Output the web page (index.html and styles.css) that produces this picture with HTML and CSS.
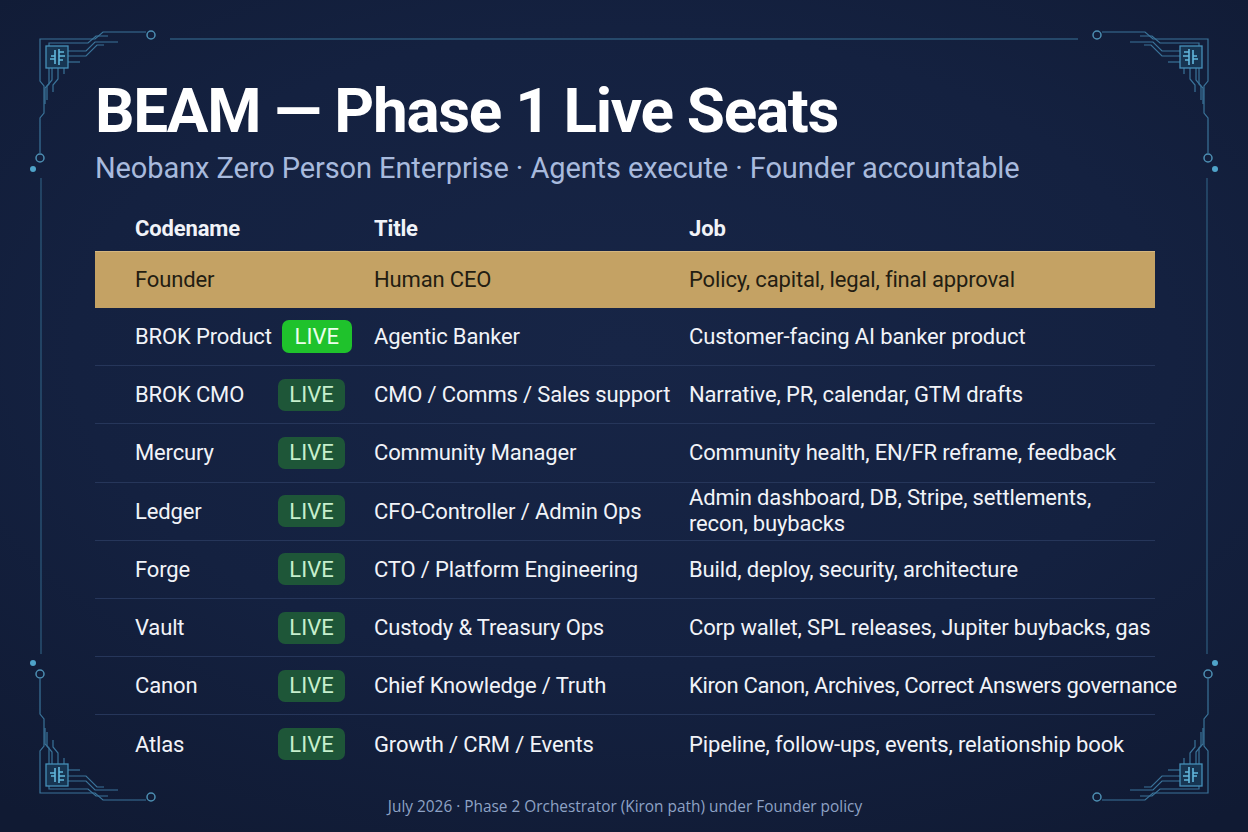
FILE: index.html
```html
<!DOCTYPE html>
<html lang="en">
<head>
<meta charset="utf-8">
<title>BEAM — Phase 1 Live Seats</title>
<link rel="stylesheet" href="styles.css">
</head>
<body>
<div class="slide">
  <svg class="deco" width="1248" height="832" viewBox="0 0 1248 832" aria-hidden="true">
    <defs>
      <g id="corner">
        <g class="trace">
          <path d="M40 153 V118 L44 113 V86 L40 81 V39 H95 L103 32 H146"/>
          <path d="M45 104 V88 L49 84 V43 H88 L96 36 H108"/>
          <path d="M68 51 H86 L95 42 H118"/>
          <path d="M68 56 H86 L97 45 H104"/>
          <path d="M68 62 H80"/>
          <path d="M52 68 V80 L47 86 V100"/>
          <path d="M58 68 V79 L53 85 V92"/>
          <path d="M64 68 V74"/>
        </g>
        <rect class="chip" x="46" y="46" width="22" height="22"/>
        <g class="glyph">
          <path d="M55 50 V64 M59 49 V65 M51 56 H55 M50 59 H55 M59 52 H64 M59 56 H65 M59 60 H63"/>
        </g>
        <circle class="ring" cx="151" cy="35" r="4"/>
        <circle class="ring" cx="40" cy="158" r="4"/>
        <circle class="dot" cx="33" cy="169" r="3"/>
      </g>
    </defs>
    <path class="frame" d="M170 39 H1078 M41 178 V654 M1207 178 V654"/>
    <use href="#corner"/>
    <use href="#corner" transform="translate(1248 0) scale(-1 1)"/>
    <use href="#corner" transform="translate(0 832) scale(1 -1)"/>
    <use href="#corner" transform="translate(1248 832) scale(-1 -1)"/>
  </svg>

  <main class="content">
    <h1 class="title">BEAM — Phase 1 Live Seats</h1>
    <p class="subtitle">Neobanx Zero Person Enterprise · Agents execute · Founder accountable</p>

    <div class="table">
      <div class="row head">
        <div class="cell c1">Codename</div>
        <div class="cell c2">Title</div>
        <div class="cell c3">Job</div>
      </div>
      <div class="row founder">
        <div class="cell c1">Founder</div>
        <div class="cell c2">Human CEO</div>
        <div class="cell c3">Policy, capital, legal, final approval</div>
      </div>
      <div class="row">
        <div class="cell c1"><span class="name">BROK Product</span><span class="badge bright">LIVE</span></div>
        <div class="cell c2">Agentic Banker</div>
        <div class="cell c3">Customer-facing AI banker product</div>
      </div>
      <div class="row">
        <div class="cell c1"><span class="name">BROK CMO</span><span class="badge">LIVE</span></div>
        <div class="cell c2">CMO / Comms / Sales support</div>
        <div class="cell c3">Narrative, PR, calendar, GTM drafts</div>
      </div>
      <div class="row">
        <div class="cell c1"><span class="name">Mercury</span><span class="badge">LIVE</span></div>
        <div class="cell c2">Community Manager</div>
        <div class="cell c3">Community health, EN/FR reframe, feedback</div>
      </div>
      <div class="row">
        <div class="cell c1"><span class="name">Ledger</span><span class="badge">LIVE</span></div>
        <div class="cell c2">CFO-Controller / Admin Ops</div>
        <div class="cell c3 wrap">Admin dashboard, DB, Stripe, settlements,<br>recon, buybacks</div>
      </div>
      <div class="row">
        <div class="cell c1"><span class="name">Forge</span><span class="badge">LIVE</span></div>
        <div class="cell c2">CTO / Platform Engineering</div>
        <div class="cell c3">Build, deploy, security, architecture</div>
      </div>
      <div class="row">
        <div class="cell c1"><span class="name">Vault</span><span class="badge">LIVE</span></div>
        <div class="cell c2">Custody &amp; Treasury Ops</div>
        <div class="cell c3">Corp wallet, SPL releases, Jupiter buybacks, gas</div>
      </div>
      <div class="row">
        <div class="cell c1"><span class="name">Canon</span><span class="badge">LIVE</span></div>
        <div class="cell c2">Chief Knowledge / Truth</div>
        <div class="cell c3 tight">Kiron Canon, Archives, Correct Answers governance</div>
      </div>
      <div class="row last">
        <div class="cell c1"><span class="name">Atlas</span><span class="badge">LIVE</span></div>
        <div class="cell c2">Growth / CRM / Events</div>
        <div class="cell c3">Pipeline, follow-ups, events, relationship book</div>
      </div>
    </div>

    <footer class="footer">July 2026 · Phase 2 Orchestrator (Kiron path) under Founder policy</footer>
  </main>
</div>
</body>
</html>
```

FILE: styles.css
```css
* { box-sizing: border-box; }

html, body {
  margin: 0;
  padding: 0;
}

body {
  width: 1248px;
  height: 832px;
  overflow: hidden;
  background: #131e39;
  font-family: Roboto, "Liberation Sans", sans-serif;
  color: #f1f3f8;
}

.slide {
  position: relative;
  width: 1248px;
  height: 832px;
  background:
    radial-gradient(ellipse 80% 70% at 50% 42%, #172546 0%, #142140 55%, #101a33 100%);
}

.deco {
  position: absolute;
  top: 0;
  left: 0;
  pointer-events: none;
}

.deco .frame {
  fill: none;
  stroke: #2c5779;
  stroke-width: 1.3;
}

.deco .trace path {
  fill: none;
  stroke: #3a7399;
  stroke-width: 1.2;
}

.deco .chip {
  fill: #173552;
  stroke: #4590b8;
  stroke-width: 1.3;
}

.deco .glyph path {
  fill: none;
  stroke: #62b7dc;
  stroke-width: 1.6;
}

.deco .ring {
  fill: none;
  stroke: #4d8fb3;
  stroke-width: 1.5;
}

.deco .dot {
  fill: #4fa3c9;
}

.content {
  position: relative;
  display: flex;
  flex-direction: column;
  padding: 80px 93px 0 95px;
}

.title {
  margin: 0;
  font-size: 62px;
  line-height: 62px;
  font-weight: 700;
  letter-spacing: -1.3px;
  color: #ffffff;
}

.subtitle {
  margin: 12px 0 0;
  font-size: 29px;
  line-height: 29px;
  font-weight: 400;
  letter-spacing: -0.1px;
  color: #a8badd;
}

.table {
  margin-top: 22px;
  display: flex;
  flex-direction: column;
}

.row {
  display: grid;
  grid-template-columns: 279px 315px 466px;
  align-items: center;
  height: 58.2px;
  border-bottom: 1px solid #26365a;
  font-size: 22px;
  letter-spacing: -0.15px;
}

.row.head {
  height: 46px;
  border-bottom: none;
  font-weight: 700;
}

.row.founder {
  height: 57px;
  border-bottom: none;
  background: #c4a264;
  box-shadow: inset 0 1px 0 #d4b67f;
  color: #231d12;
}

.row.last {
  border-bottom: none;
}

.cell {
  white-space: nowrap;
}

.c1 {
  padding-left: 40px;
  display: flex;
  align-items: center;
}

.c3.wrap {
  line-height: 26px;
}

.c3.tight {
  letter-spacing: -0.35px;
}

.name {
  min-width: 133px;
  margin-right: 10px;
}

.badge {
  display: inline-flex;
  align-items: center;
  justify-content: center;
  height: 32px;
  width: 67px;
  border-radius: 7px;
  background: #1e5638;
  color: #c6efcd;
  font-size: 22px;
  letter-spacing: 0;
}

.badge.bright {
  width: 70px;
  height: 33px;
  background: #1fc22c;
  color: #ecffec;
}

.footer {
  margin-top: 22px;
  text-align: center;
  font-family: "Open Sans", "Noto Sans", sans-serif;
  font-size: 15.4px;
  color: #8ea2c5;
}
```
